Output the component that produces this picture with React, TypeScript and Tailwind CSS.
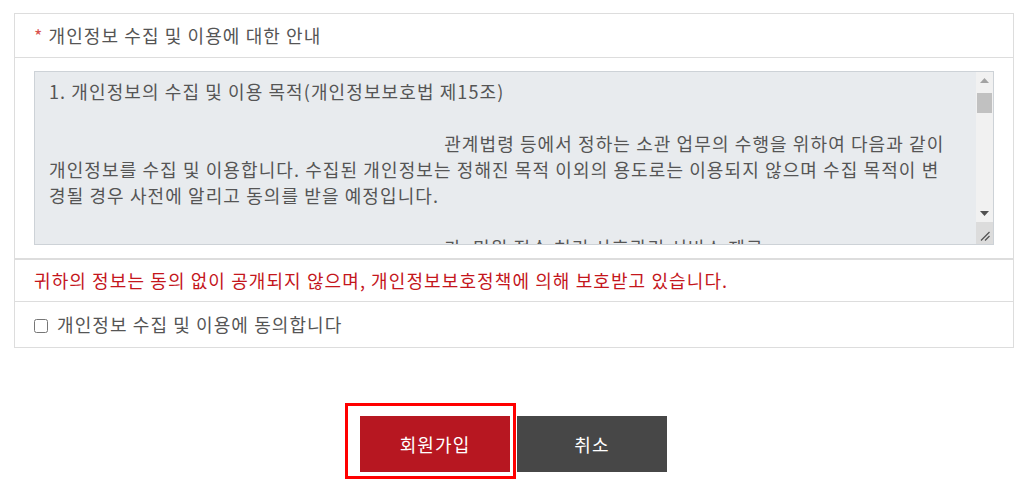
import React from "react";

const pad = " ".repeat(77);

const terms =
  "1. 개인정보의 수집 및 이용 목적(개인정보보호법 제15조)\n\n" +
  pad +
  "관계법령 등에서 정하는 소관 업무의 수행을 위하여 다음과 같이 개인정보를 수집 및 이용합니다. 수집된 개인정보는 정해진 목적 이외의 용도로는 이용되지 않으며 수집 목적이 변경될 경우 사전에 알리고 동의를 받을 예정입니다.\n\n" +
  pad +
  "가. 민원 접수 처리 사후관리 서비스 제공\n" +
  pad +
  "나. 회원 관리 및 본인 확인\n\n" +
  "2. 수집하는 개인정보의 항목\n\n" +
  pad +
  "필수항목 : 이름, 아이디, 비밀번호, 연락처, 이메일\n";

const font = { fontFamily: '"Noto Sans CJK KR", "Noto Sans", sans-serif' };

function FakeScrollbar() {
  return (
    <div className="w-[17px] flex flex-col bg-[#f1f1f1]">
      <div className="h-[17px] flex items-center justify-center">
        <svg width="9" height="5" viewBox="0 0 9 5">
          <path d="M0 5 L4.5 0 L9 5 Z" fill="#a3a3a3" />
        </svg>
      </div>
      <div className="flex-1 pt-[4px] px-[1px]">
        <div className="h-[20px] bg-[#c1c1c1]" />
      </div>
      <div className="h-[17px] flex items-center justify-center">
        <svg width="9" height="5" viewBox="0 0 9 5">
          <path d="M0 0 L9 0 L4.5 5 Z" fill="#505050" />
        </svg>
      </div>
      <div className="h-[22px] bg-[#dcdcdc] flex items-end justify-end pr-[3px] pb-[3px]">
        <svg width="10" height="10" viewBox="0 0 10 10">
          <path d="M9.5 1 L1 9.5 M9.5 5 L5 9.5" stroke="#555" strokeWidth="1.3" />
        </svg>
      </div>
    </div>
  );
}

export default function App() {
  return (
    <div className="bg-white min-h-screen pt-[13px] text-[18px] tracking-[1.1px] text-[#555]" style={font}>
      <div className="ml-[14px] w-[1000px] border border-[#dddddd]">
        <div className="h-[44px] flex items-center px-[19px] border-b border-[#dddddd]">
          <span className="text-[#d9534f] mr-[5px]">*</span>
          <span>개인정보 수집 및 이용에 대한 안내</span>
        </div>
        <div className="px-[19px] py-[13px] border-b-2 border-[#dddddd]">
          <div className="flex h-[174px] border border-[#cdd2d7] bg-[#e8ebee]">
            <textarea
              readOnly
              defaultValue={terms}
              className="flex-1 h-full resize-none bg-transparent pl-[14px] pr-[25px] pt-[6px] leading-[26px] text-[18px] tracking-[1.1px] text-[#555] whitespace-pre-wrap outline-none overflow-hidden"
              style={font}
            />
            <FakeScrollbar />
          </div>
        </div>
        <div className="h-[42px] flex items-center px-[19px] border-b border-[#dddddd] text-[#c4161c]">
          귀하의 정보는 동의 없이 공개되지 않으며, 개인정보보호정책에 의해 보호받고 있습니다.
        </div>
        <div className="h-[45px] flex items-center px-[19px]">
          <label className="flex items-center">
            <input type="checkbox" className="w-[14px] h-[14px] mr-[9px] mt-[3px]" />
            <span>개인정보 수집 및 이용에 동의합니다</span>
          </label>
        </div>
      </div>

      <div className="flex items-start pl-[345px] mt-[55px]">
        <div className="border-[3px] border-[#ff0000] pt-[10px] pl-[12px] pr-[3px] pb-[4px]">
          <button className="block w-[150px] h-[56px] bg-[#b71721] text-white text-[18px]">
            회원가입
          </button>
        </div>
        <button className="ml-[1px] mt-[13px] w-[150px] h-[56px] bg-[#474747] text-white text-[18px]">
          취소
        </button>
      </div>
    </div>
  );
}
